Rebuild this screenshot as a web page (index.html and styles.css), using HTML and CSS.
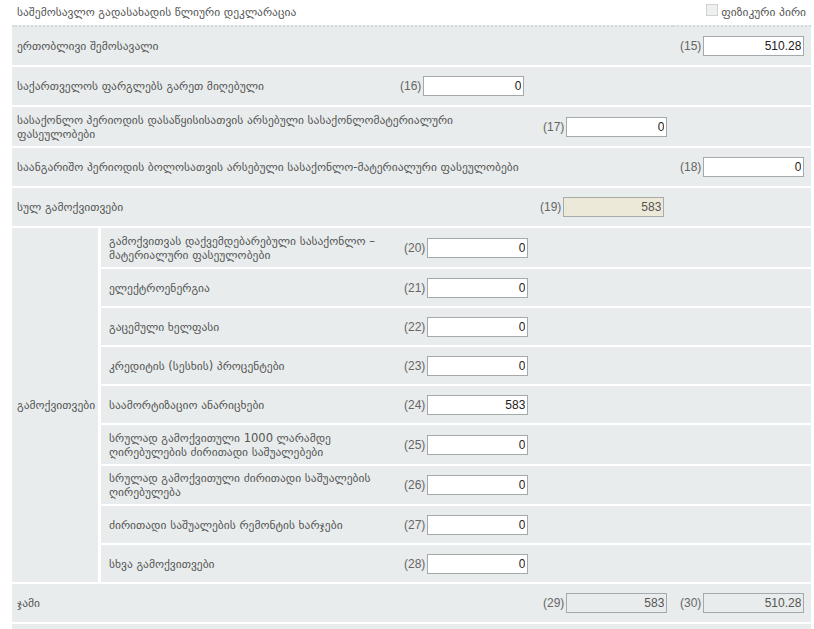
FILE: index.html
```html
<!DOCTYPE html>
<html lang="ka">
<head>
  <meta charset="UTF-8" />
  <title>საშემოსავლო დეკლარაცია</title>
  <link rel="stylesheet" href="styles.css">
</head>
<body>
  <div class="form-head">
    <span class="form-title">საშემოსავლო გადასახადის წლიური დეკლარაცია</span>
    <label class="person-check"><span class="check-box"></span>ფიზიკური პირი</label>
  </div>

  <table class="decl">
    <colgroup>
      <col class="c-group">
      <col class="c-label">
      <col class="c-f1">
      <col class="c-f2">
      <col class="c-f3">
    </colgroup>

    <!-- შემოსავლები -->
    <tr class="first">
      <td colspan="4" class="lbl">ერთობლივი შემოსავალი</td>
      <td class="fld f3"><span class="num">(15)</span><input class="val" value="510.28"></td>
    </tr>
    <tr>
      <td colspan="2" class="lbl">საქართველოს ფარგლებს გარეთ მიღებული</td>
      <td class="fld f1"><span class="num">(16)</span><input class="val" value="0"></td>
      <td></td>
      <td></td>
    </tr>
    <tr class="tall">
      <td colspan="3" class="lbl">სასაქონლო პერიოდის დასაწყისისათვის არსებული სასაქონლომატერიალური<br>ფასეულობები</td>
      <td class="fld f2"><span class="num">(17)</span><input class="val" value="0"></td>
      <td></td>
    </tr>
    <tr>
      <td colspan="4" class="lbl">საანგარიშო პერიოდის ბოლოსათვის არსებული სასაქონლო-მატერიალური ფასეულობები</td>
      <td class="fld f3"><span class="num">(18)</span><input class="val" value="0"></td>
    </tr>
    <tr>
      <td colspan="3" class="lbl">სულ გამოქვითვები</td>
      <td class="fld f2 tight"><span class="num">(19)</span><input class="val ro" value="583" readonly></td>
      <td></td>
    </tr>

    <!-- გამოქვითვები -->
    <tr class="two">
      <td rowspan="9" class="lbl group">გამოქვითვები</td>
      <td class="sub">გამოქვითვას დაქვემდებარებული სასაქონლო –<br>მატერიალური ფასეულობები</td>
      <td class="fld f1 sub-f"><span class="num">(20)</span><input class="val" value="0"></td>
      <td colspan="2"></td>
    </tr>
    <tr class="one">
      <td class="sub">ელექტროენერგია</td>
      <td class="fld f1 sub-f"><span class="num">(21)</span><input class="val" value="0"></td>
      <td colspan="2"></td>
    </tr>
    <tr class="one">
      <td class="sub">გაცემული ხელფასი</td>
      <td class="fld f1 sub-f"><span class="num">(22)</span><input class="val" value="0"></td>
      <td colspan="2"></td>
    </tr>
    <tr class="one">
      <td class="sub">კრედიტის (სესხის) პროცენტები</td>
      <td class="fld f1 sub-f"><span class="num">(23)</span><input class="val" value="0"></td>
      <td colspan="2"></td>
    </tr>
    <tr class="one">
      <td class="sub">საამორტიზაციო ანარიცხები</td>
      <td class="fld f1 sub-f"><span class="num">(24)</span><input class="val" value="583"></td>
      <td colspan="2"></td>
    </tr>
    <tr class="two">
      <td class="sub">სრულად გამოქვითული 1000 ლარამდე<br>ღირებულების ძირითადი საშუალებები</td>
      <td class="fld f1 sub-f"><span class="num">(25)</span><input class="val" value="0"></td>
      <td colspan="2"></td>
    </tr>
    <tr>
      <td class="sub">სრულად გამოქვითული ძირითადი საშუალების<br>ღირებულება</td>
      <td class="fld f1 sub-f"><span class="num">(26)</span><input class="val" value="0"></td>
      <td colspan="2"></td>
    </tr>
    <tr class="one">
      <td class="sub">ძირითადი საშუალების რემონტის ხარჯები</td>
      <td class="fld f1 sub-f"><span class="num">(27)</span><input class="val" value="0"></td>
      <td colspan="2"></td>
    </tr>
    <tr class="one">
      <td class="sub">სხვა გამოქვითვები</td>
      <td class="fld f1 sub-f"><span class="num">(28)</span><input class="val" value="0"></td>
      <td colspan="2"></td>
    </tr>

    <!-- ჯამი -->
    <tr>
      <td colspan="3" class="lbl">ჯამი</td>
      <td class="fld f2"><span class="num">(29)</span><input class="val sum" value="583" readonly></td>
      <td class="fld f3"><span class="num">(30)</span><input class="val sum" value="510.28" readonly></td>
    </tr>
    <tr>
      <td colspan="5"></td>
    </tr>
  </table>
</body>
</html>
```

FILE: styles.css
```css
/* ================================
   ზოგადი
   ================================ */
* {
  box-sizing: border-box;
}
body {
  margin: 0;
  font-family: "DejaVu Sans", "Noto Sans", sans-serif;
  font-size: 11.5px;
  color: #555;
  background: #fff;
}

/* სათაური */
.form-head {
  display: flex;
  justify-content: space-between;
  align-items: center;
  height: 25px;
  padding: 0 8px 1px 17px;
}
.person-check {
  display: flex;
  align-items: center;
  gap: 3px;
}
.check-box {
  display: inline-block;
  width: 12px;
  height: 12px;
  border: 1px solid #cdd1d3;
  background: #eef0f0;
  margin-top: -4px;
}

/* ================================
   ცხრილი
   ================================ */
.decl {
  margin-left: 12px;
  width: 799px;
  table-layout: fixed;
  border-collapse: separate;
  border-spacing: 0;
}
.c-group { width: 89px; }
.c-label { width: 297px; }
.c-f1 { width: 135px; }
.c-f2 { width: 140px; }
.c-f3 { width: 138px; }

.decl td {
  background: #e8ecec;
  height: 40px;
  padding: 0;
  border-bottom: 2px solid #fff;
  line-height: 14px;
  vertical-align: middle;
}
.decl tr.first td {
  border-top: 2px dotted #d3dada;
  height: 42px;
}
.decl tr.tall td { height: 41px; }
.decl tr.two td { height: 41px; }
.decl tr.one td { height: 39px; }

.decl .lbl {
  padding-left: 5px;
}
.decl .group {
  border-right: 3px solid #fff;
}
.decl .sub {
  padding-left: 8px;
}

/* ველები */
.decl .fld {
  white-space: nowrap;
}
.decl .f1 { padding-left: 2px; }
.decl .f1.sub-f { padding-left: 6px; }
.decl .f2 { padding-left: 10px; }
.decl .f2.tight { padding-left: 7px; }
.decl .f3 { padding-left: 7px; }

.num {
  font-family: "Liberation Sans", Arial, sans-serif;
  font-size: 12px;
  color: #666;
  margin-right: 2px;
  vertical-align: middle;
}
.val {
  width: 101px;
  height: 20px;
  border: 1px solid #a4a9ab;
  background: #fff;
  padding: 0 2px;
  text-align: right;
  font-family: "Liberation Sans", Arial, sans-serif;
  font-size: 12px;
  color: #222;
  vertical-align: middle;
  outline: none;
}
.val.ro {
  background: #ece9d8;
  color: #555;
  border-color: #a9aba6;
}
.val.sum {
  background: #e8ecec;
  color: #555;
}
```
